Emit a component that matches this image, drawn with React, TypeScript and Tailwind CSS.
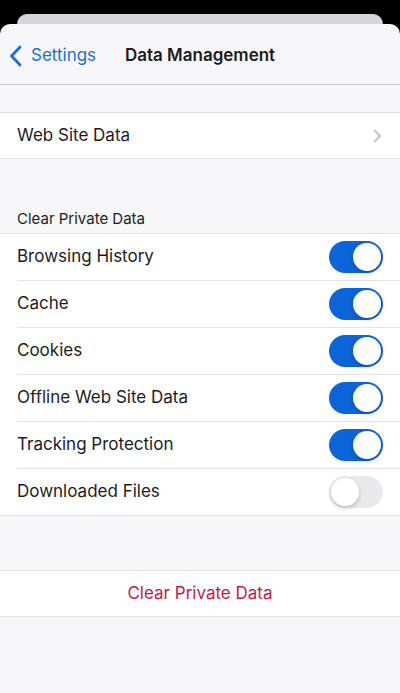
import React from "react";

function Toggle({ on }: { on: boolean }) {
  return (
    <div
      className={
        "relative w-[54px] h-[32px] rounded-full " +
        (on ? "bg-[#0b65d8]" : "bg-[#e9e9eb]")
      }
    >
      <div
        className={
          "absolute top-[2px] w-[28px] h-[28px] rounded-full bg-white shadow-[0_2px_4px_rgba(0,0,0,0.2)] " +
          (on ? "right-[2px]" : "left-[2px]")
        }
      />
    </div>
  );
}

const rows: [string, boolean][] = [
  ["Browsing History", true],
  ["Cache", true],
  ["Cookies", true],
  ["Offline Web Site Data", true],
  ["Tracking Protection", true],
  ["Downloaded Files", false],
];

export default function App() {
  return (
    <div
      className="w-[400px] h-[693px] bg-black overflow-hidden flex flex-col"
      style={{ fontFamily: "Inter, 'Liberation Sans', sans-serif" }}
    >
      <div className="mt-[14px] mx-[17px] h-[20px] rounded-t-[10px] bg-[#d6d6d9] shrink-0" />
      <div className="-mt-[10px] flex-1 bg-[#f7f7f9] rounded-t-[10px] flex flex-col">
        <div className="h-[61px] pt-[3px] shrink-0 relative flex items-center border-b border-[#c8c8cc]">
          <div className="flex items-center pl-[9px] text-[#1b6fd2] text-[17px]">
            <svg width="14" height="22" viewBox="0 0 14 22" className="mr-[8px]">
              <path d="M11 2 L2.5 11 L11 20" fill="none" stroke="#1b6fd2" strokeWidth="2.8" strokeLinecap="round" strokeLinejoin="round" />
            </svg>
            <span>Settings</span>
          </div>
          <div className="absolute inset-0 pt-[3px] flex items-center justify-center text-[17px] font-semibold text-[#1c1c1e] pointer-events-none">
            Data Management
          </div>
        </div>
        <div className="h-[27px] shrink-0" />
        <div className="bg-white border-y border-[#e2e2e6] h-[47px] shrink-0 flex items-center pl-[17px] pr-[18px] justify-between">
          <span className="text-[17px] text-[#1c1c1e]">Web Site Data</span>
          <svg width="9" height="14" viewBox="0 0 9 14">
            <path d="M1.5 1.5 L7 7 L1.5 12.5" fill="none" stroke="#c4c4c7" strokeWidth="2" strokeLinecap="round" strokeLinejoin="round" />
          </svg>
        </div>
        <div className="h-[49px] shrink-0" />
        <div className="h-[25px] shrink-0 pl-[17px] text-[15px] text-[#1c1c1e] flex items-start">
          Clear Private Data
        </div>
        <div className="bg-white border-y border-[#e2e2e6] shrink-0">
          {rows.map(([label, on], i) => (
            <div key={label} className="pl-[17px]">
              <div
                className={
                  "flex items-center justify-between pr-[17px] " +
                  (i > 0 ? "h-[47px] border-t border-[#e4e4e8]" : "h-[46px]")
                }
              >
                <span className="text-[17px] text-[#1c1c1e]">{label}</span>
                <Toggle on={on} />
              </div>
            </div>
          ))}
        </div>
        <div className="h-[54px] shrink-0" />
        <div className="bg-white border-y border-[#e2e2e6] h-[47px] shrink-0 flex items-center justify-center text-[17px] text-[#c8154e]">
          Clear Private Data
        </div>
      </div>
    </div>
  );
}
